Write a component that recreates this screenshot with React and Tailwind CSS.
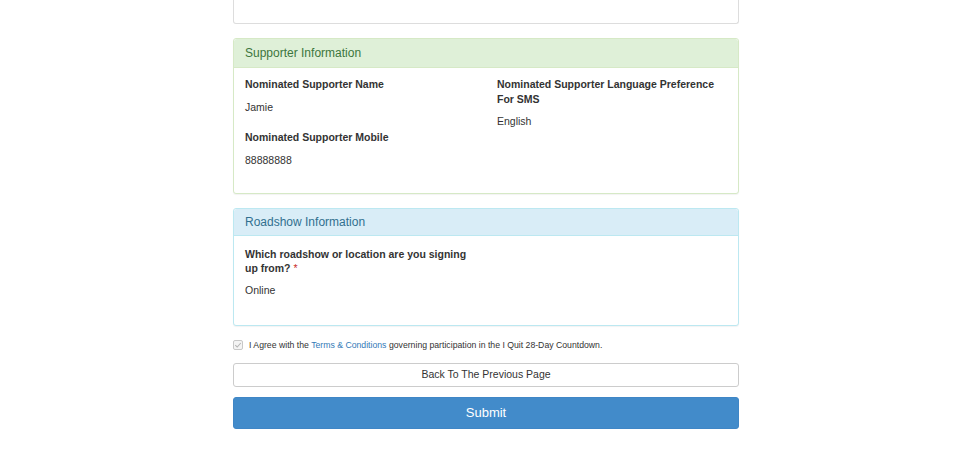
import React from 'react';

const Field = ({ label, value, required, gap = 'mb-[8px]', lead = 'leading-[15px]' }) => (
  <div className="mb-[15px]">
    <p className={`text-[10.5px] font-bold text-[#333] ${lead} ${gap}`}>
      {label}
      {required && <span className="font-normal text-[#c9302c]"> *</span>}
    </p>
    <p className="text-[10.5px] leading-[15px] text-[#333]">{value}</p>
  </div>
);

const Panel = ({ title, tone, children, bodyClass = '' }) => {
  const tones = {
    success: {
      wrap: 'border-[#d6e9c6]',
      head: 'bg-[#dff0d8] text-[#3c763d] border-[#d6e9c6] pt-[6px] pb-[6px]',
    },
    info: {
      wrap: 'border-[#bce8f1]',
      head: 'bg-[#d9edf7] text-[#31708f] border-[#bce8f1] pt-[5px] pb-[5px]',
    },
  };
  const t = tones[tone];
  return (
    <div className={`rounded-[3px] border bg-white shadow-[0_1px_1px_rgba(0,0,0,0.05)] ${t.wrap}`}>
      <div className={`rounded-t-[3px] border-b px-[11px] text-[12px] leading-[16px] ${t.head}`}>
        {title}
      </div>
      <div className={`px-[11px] ${bodyClass}`}>{children}</div>
    </div>
  );
};

export default function App() {
  return (
    <div className="min-h-[465px] bg-white" style={{ fontFamily: '"Liberation Sans", Arial, sans-serif' }}>
      <div className="mx-auto w-[506px] translate-x-[6px]">
        {/* tail of the previous panel */}
        <div className="mb-[14px] h-[24px] rounded-b-[3px] border border-t-0 border-[#ddd] bg-white" />

        <div className="mb-[14px]">
          <Panel title="Supporter Information" tone="success" bodyClass="pt-[9px] pb-[10px]">
            <div className="grid grid-cols-2 gap-x-[22px]">
              <div>
                <Field label="Nominated Supporter Name" value="Jamie" />
                <Field label="Nominated Supporter Mobile" value="88888888" />
              </div>
              <div>
                <Field label="Nominated Supporter Language Preference For SMS" value="English" gap="mb-[7px]" />
              </div>
            </div>
          </Panel>
        </div>

        <Panel title="Roadshow Information" tone="info" bodyClass="pt-[11px] pb-[12px]">
          <div className="grid grid-cols-2 gap-x-[22px]">
            <div>
              <Field
                label="Which roadshow or location are you signing up from?"
                value="Online"
                required
                lead="leading-[14px]"
                gap="mb-[7.5px]"
              />
            </div>
          </div>
        </Panel>

        <label className="mt-[13px] mb-[11px] flex items-center gap-[6px] text-[8.7px] leading-[13px] text-[#333]">
          <span className="flex h-[10px] w-[10px] items-center justify-center rounded-[2px] border border-[#c8c8c8] bg-[#f4f4f4]">
            <svg viewBox="0 0 10 10" className="h-[8px] w-[8px]" fill="none" stroke="#b5b5b5" strokeWidth="1.3">
              <path d="M1.5 5.2 L4 7.5 L8.5 2.5" />
            </svg>
          </span>
          <span>
            I Agree with the <span className="text-[#337ab7]">Terms &amp; Conditions</span> governing participation in the I Quit 28-Day Countdown.
          </span>
        </label>

        <button className="mb-[10px] block h-[24px] w-full rounded-[3px] border border-[#ccc] bg-white text-[10.5px] text-[#333]">
          Back To The Previous Page
        </button>

        <button className="block h-[32px] w-full rounded-[3px] border border-[#3f86c6] bg-[#428bca] text-[13px] text-white">
          Submit
        </button>
      </div>
    </div>
  );
}
